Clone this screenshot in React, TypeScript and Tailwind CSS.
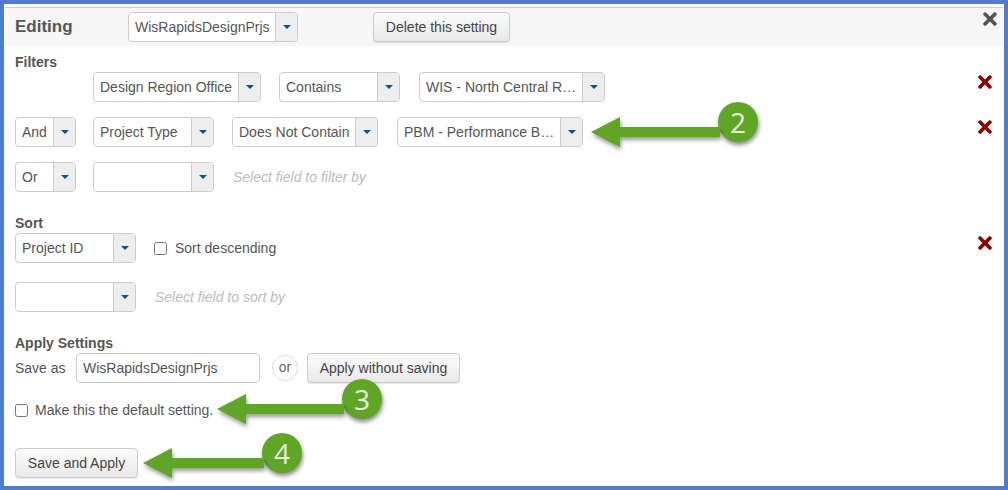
import { FaTimes } from 'react-icons/fa';

function Select({ value, w, arrow = 'w-[22px]' }: { value?: string; w: string; arrow?: string }) {
  return (
    <div className={`${w} h-[30px] flex shrink-0 rounded border border-[#ccc] bg-white overflow-hidden`}>
      <div className="flex-1 min-w-0 px-[6px] leading-[28px] whitespace-nowrap overflow-hidden">{value}</div>
      <div className={`${arrow} shrink-0 flex items-center justify-center bg-[#eee] border-l border-[#ccc]`}>
        <span className="w-0 h-0 border-x-[4px] border-x-transparent border-t-[4px] border-t-[#00549f]" />
      </div>
    </div>
  );
}

function Button({ children, className = '' }: { children: React.ReactNode; className?: string }) {
  return (
    <button className={`h-[30px] rounded border border-[#ccc] bg-gradient-to-b from-[#fbfbfb] to-[#e9e9e9] text-[#444] shadow-[0_1px_1px_rgba(0,0,0,0.1)] ${className}`}>
      {children}
    </button>
  );
}

function Remove({ className = '' }: { className?: string }) {
  return <FaTimes size={20} className={`ml-auto mr-[9px] text-[#8b0000] shrink-0 ${className}`} />;
}

function Hint({ children, className }: { children: React.ReactNode; className: string }) {
  return <span className={`italic text-[#bbb] ${className}`}>{children}</span>;
}

function Callout({ n, pos, svgW }: { n: number; pos: string; svgW: number }) {
  return (
    <div className={`absolute flex items-start ${pos}`}>
      <svg width={svgW} height={30} viewBox={`0 0 ${svgW} 30`} className="mt-[15px] overflow-visible drop-shadow-[1px_3px_2px_rgba(0,0,0,0.4)]">
        <path d={`M0 15 L29 0 V10 H${svgW} V20 H29 V30 Z`} fill="#5fa526" />
      </svg>
      <div className="w-10 h-10 -ml-[2px] rounded-full bg-[#5fa526] text-[#e8efe0] text-[28px] leading-10 text-center font-['Open_Sans',sans-serif] shadow-[1px_3px_4px_rgba(0,0,0,0.45)]">
        {n}
      </div>
    </div>
  );
}

export default function App() {
  return (
    <div className="relative w-[1008px] h-[490px] border-4 border-[#4f7ccb] bg-white text-[14px] text-[#555] font-['Liberation_Sans',Arial,sans-serif] overflow-hidden">
      {/* Header */}
      <div className="mt-[3px] mx-px h-[39px] flex items-start bg-[#f6f6f6] border-t border-[#ccc] pt-[4px] pl-[10px]">
        <span className="w-[113px] mt-[2px] text-[17px] font-bold">Editing</span>
        <Select value="WisRapidsDesignPrjs" w="w-[170px]" />
        <Button className="ml-[75px] w-[137px]">Delete this setting</Button>
        <FaTimes size={20} className="ml-auto mr-[3px] -mt-[3px] text-[#555]" />
      </div>

      <div className="pl-[11px]">
        {/* Filters */}
        <div className="mt-[8px] h-[16px] leading-[16px] font-bold">Filters</div>
        <div className="mt-[2px] flex gap-[18px]">
          <div className="w-[60px]" />
          <Select value="Design Region Office" w="w-[168px]" />
          <Select value="Contains" w="w-[121px]" />
          <Select value="WIS - North Central R…" w="w-[186px] ml-px" />
          <Remove />
        </div>
        <div className="mt-[15px] flex gap-[18px]">
          <Select value="And" w="w-[61px]" />
          <Select value="Project Type" w="w-[121px] -ml-px" />
          <Select value="Does Not Contain" w="w-[146px]" />
          <Select value="PBM - Performance B…" w="w-[186px] ml-px" />
          <Remove />
        </div>
        <div className="mt-[15px] flex items-center gap-[18px]">
          <Select value="Or" w="w-[61px]" />
          <Select w="w-[121px] -ml-px" />
          <Hint className="ml-px">Select field to filter by</Hint>
        </div>

        {/* Sort */}
        <div className="mt-[23px] h-[16px] leading-[16px] font-bold">Sort</div>
        <div className="mt-[2px] flex items-center">
          <Select value="Project ID" w="w-[121px]" />
          <input type="checkbox" readOnly className="ml-[18px] w-[13px] h-[13px]" />
          <span className="ml-[8px]">Sort descending</span>
          <Remove className="self-start" />
        </div>
        <div className="mt-[19px] flex items-center">
          <Select w="w-[121px]" />
          <Hint className="ml-[19px]">Select field to sort by</Hint>
        </div>

        {/* Apply settings */}
        <div className="mt-[23px] h-[16px] leading-[16px] font-bold">Apply Settings</div>
        <div className="mt-[2px] flex items-center">
          <span className="w-[61px]">Save as</span>
          <div className="w-[184px] h-[30px] px-[6px] leading-[28px] rounded border border-[#ccc]">WisRapidsDesignPrjs</div>
          <span className="ml-[12px] w-[26px] h-[26px] rounded-full border border-[#dcdcd4] text-center leading-[22px] text-[#666]">or</span>
          <Button className="ml-[9px] w-[153px]">Apply without saving</Button>
        </div>
        <div className="mt-[17px] flex items-center">
          <input type="checkbox" readOnly className="w-[13px] h-[13px]" />
          <span className="ml-[7px]">Make this the default setting.</span>
        </div>
        <Button className="mt-[27px] w-[123px]">Save and Apply</Button>
      </div>

      {/* Callouts, offsets are inside the 4px frame */}
      <Callout n={2} pos="left-[587px] top-[98px]" svgW={129} />
      <Callout n={3} pos="left-[213px] top-[375px]" svgW={127} />
      <Callout n={4} pos="left-[139px] top-[429px]" svgW={121} />
    </div>
  );
}
